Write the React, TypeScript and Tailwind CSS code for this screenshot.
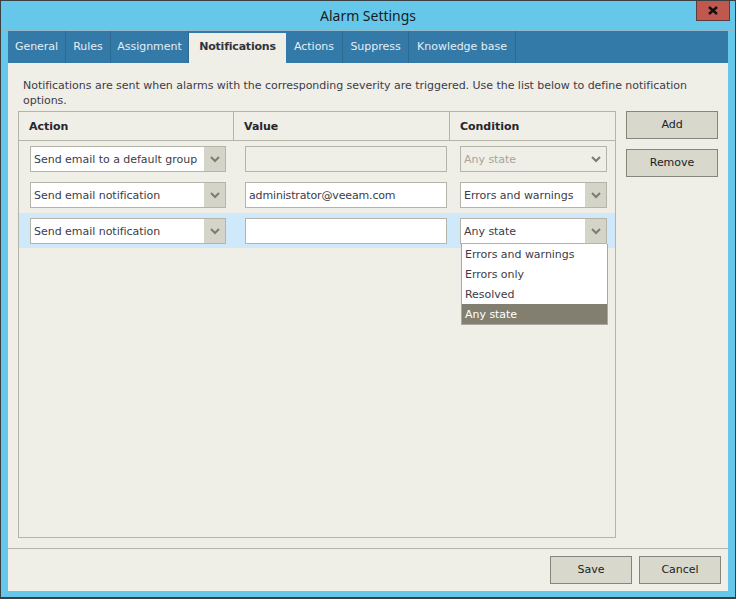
const font = "font-['DejaVu_Sans','Liberation_Sans',sans-serif]";

const tabs = [
  { label: 'General', width: 'w-[58px]' },
  { label: 'Rules', width: 'w-[45px]' },
  { label: 'Assignment', width: 'w-[78px]' },
  { label: 'Notifications', width: 'w-[97px]', active: true },
  { label: 'Actions', width: 'w-[57px]' },
  { label: 'Suppress', width: 'w-[66px]' },
  { label: 'Knowledge base', width: 'w-[107px]' },
];

const Chevron = () => (
  <svg width="10" height="7" viewBox="0 0 10 7" fill="none" stroke="#7d7c70" strokeWidth="2">
    <path d="M1 1l4 4 4-4" />
  </svg>
);

const Combo = ({ text, width, disabled }: { text: string; width: string; disabled?: boolean }) => (
  <div className={`flex h-[26px] ${width} shrink-0 border border-[#b5b4a9] ${disabled ? 'bg-[#efeee7] text-[#a5a59c]' : 'bg-white text-[#3c3c48]'}`}>
    <div className="flex-1 pl-[3px] pt-[1px] leading-[24px] whitespace-nowrap overflow-hidden">{text}</div>
    <div className={`flex w-[21px] items-center justify-center ${disabled ? '' : 'bg-[#d5d4c8]'}`}>
      <Chevron />
    </div>
  </div>
);

const ValueBox = ({ text, disabled }: { text?: string; disabled?: boolean }) => (
  <div className={`h-[26px] w-[202px] shrink-0 border border-[#b5b4a9] pl-[3px] pt-[1px] leading-[24px] tracking-[-0.15px] text-[#3c3c48] ${disabled ? 'bg-[#efeee7]' : 'bg-white'}`}>
    {text}
  </div>
);

const Btn = ({ label, className }: { label: string; className: string }) => (
  <button className={`h-[28px] border border-[#85857a] bg-[#d8d8cc] text-[#1c1c24] ${className}`}>{label}</button>
);

const menuItems = ['Errors and warnings', 'Errors only', 'Resolved', 'Any state'];

export default function App() {
  return (
    <div className={`flex h-[599px] w-[736px] flex-col overflow-hidden border border-[#3a3f44] border-b-2 bg-[#65c8eb] text-[11px] tracking-[-0.03px] ${font}`}>
      {/* title bar */}
      <div className="relative h-[30px] shrink-0 border-b border-[#8fb9cc] text-center font-['Noto_Sans',sans-serif] text-[14px] leading-[29px] text-[#1b1b1b]">
        Alarm Settings
        <div className="absolute right-[5px] top-[-1px] flex h-[21px] w-[34px] items-center justify-center border border-[#5d3b38] bg-[#c0584f]">
          <svg width="10" height="9" viewBox="0 0 10 9" stroke="#111" strokeWidth="2.4" fill="none">
            <path d="M1 1l8 7M9 1L1 8" />
          </svg>
        </div>
      </div>

      <div className="mx-[7px] flex flex-1 flex-col">
        {/* tabs */}
        <div className="flex h-[32px] shrink-0 bg-[#337aa8]">
          {tabs.map((t) =>
            t.active ? (
              <div key={t.label} className={`mt-[2px] ${t.width} bg-[#efeee7] text-center font-bold leading-[28px] tracking-[-0.2px] text-[#33333b]`}>
                {t.label}
              </div>
            ) : (
              <div key={t.label} className={`${t.width} border-r border-[#2c6a94] text-center leading-[32px] text-[#e4eef5]`}>
                {t.label}
              </div>
            )
          )}
        </div>

        <div className="flex flex-1 flex-col bg-[#efeee7]">
          <div className="flex-1 pl-[10px] pt-[15px]">
            <p className="pl-[5px] leading-[15px] text-[#3c3c48]">
              Notifications are sent when alarms with the corresponding severity are triggered. Use the list below to define notification
              <br />
              options.
            </p>
            <div className="mt-[3px] flex">
              {/* grid */}
              <div className="h-[427px] w-[598px] border border-[#b5b4a9]">
                <div className="flex h-[29px] border-b border-[#b5b4a9] font-bold leading-[30px] text-[#26262c]">
                  <div className="w-[215px] border-r border-[#b5b4a9] pl-[10px]">Action</div>
                  <div className="w-[216px] border-r border-[#b5b4a9] pl-[10px]">Value</div>
                  <div className="pl-[10px]">Condition</div>
                </div>
                <div className="flex flex-col gap-[10px] pl-[11px] pt-[5px]">
                  <div className="flex gap-[19px]">
                    <Combo text="Send email to a default group" width="w-[196px]" />
                    <ValueBox disabled />
                    <Combo text="Any state" width="w-[147px] ml-[-6px]" disabled />
                  </div>
                  <div className="flex gap-[19px]">
                    <Combo text="Send email notification" width="w-[196px]" />
                    <ValueBox text="administrator@veeam.com" />
                    <Combo text="Errors and warnings" width="w-[147px] ml-[-6px]" />
                  </div>
                </div>
                <div className="mt-[5px] flex h-[35px] gap-[19px] bg-[#cfe8fa] pl-[11px] pt-[5px]">
                  <Combo text="Send email notification" width="w-[196px]" />
                  <ValueBox />
                  <div className="relative ml-[-6px]">
                    <Combo text="Any state" width="w-[147px]" />
                    <div className="absolute left-[1px] top-[26px] w-[147px] border border-[#a9a89e] border-t-0 bg-white text-[#3c3c48]">
                      {menuItems.map((m) => (
                        <div key={m} className={`h-[20px] pl-[3px] pt-[1px] leading-[20px] ${m === 'Any state' ? 'bg-[#827f70] text-white' : ''}`}>
                          {m}
                        </div>
                      ))}
                    </div>
                  </div>
                </div>
              </div>
              <div className="ml-[10px] flex w-[92px] flex-col gap-[10px]">
                <Btn label="Add" className="" />
                <Btn label="Remove" className="" />
              </div>
            </div>
          </div>
          {/* footer */}
          <div className="flex h-[43px] shrink-0 justify-end gap-[7px] border-t border-[#b5b4a9] pr-[7px] pt-[7px]">
            <Btn label="Save" className="w-[82px]" />
            <Btn label="Cancel" className="w-[82px]" />
          </div>
        </div>
      </div>
      <div className="h-[6px] shrink-0" />
    </div>
  );
}
